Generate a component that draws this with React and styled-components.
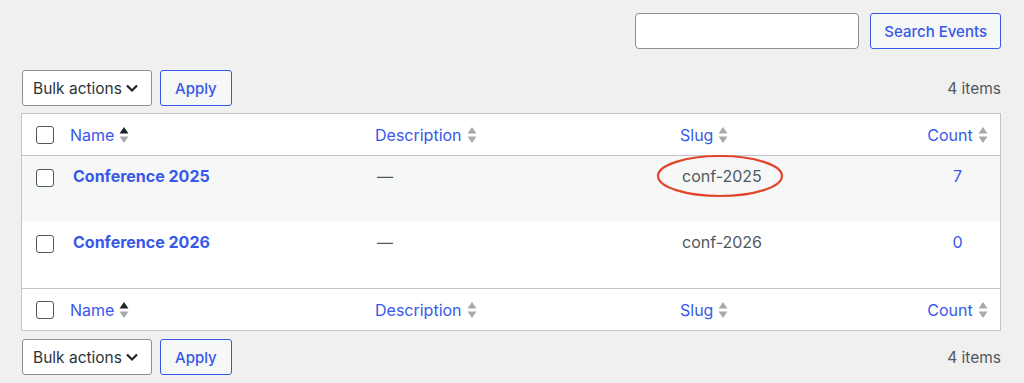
import React from "react";
import styled, { createGlobalStyle } from "styled-components";

const GlobalStyle = createGlobalStyle`
    body {
        margin: 0;
        background: #f0f0f0;
        font-family: Inter, "Noto Sans", "Liberation Sans", sans-serif;
        font-size: 16px;
        color: #2c3338;
    }
`;

const Page = styled.div`
    padding: 13px 23px 0 21px;
`;

const SearchBar = styled.div`
    display: flex;
    justify-content: flex-end;
    gap: 11px;
`;

const SearchInput = styled.input`
    width: 224px;
    height: 36px;
    box-sizing: border-box;
    border: 1px solid #8c8f94;
    border-radius: 4px;
    background: #fff;
`;

const Button = styled.button`
    height: 36px;
    box-sizing: border-box;
    padding: 0 ${(p) => p.$pad || 14}px;
    border: 1px solid #3858e9;
    border-radius: 3px;
    background: #f6f7f7;
    color: #3858e9;
    font-family: inherit;
    font-size: 15px;
    font-weight: 500;
    white-space: nowrap;
`;

const TableNav = styled.div`
    display: flex;
    align-items: center;
    gap: 8px;
    height: 36px;
    margin-top: ${(p) => p.$top}px;
`;

const Select = styled.div`
    display: flex;
    align-items: center;
    gap: 3px;
    height: 36px;
    box-sizing: border-box;
    width: 130px;
    margin-left: 1px;
    padding: 0 10px;
    border: 1px solid #8c8f94;
    border-radius: 3px;
    background: #fff;
    color: #2c3338;
    font-size: 15.5px;
    white-space: nowrap;
`;

const Count = styled.span`
    margin-left: auto;
    color: #50575e;
    font-size: 15.5px;
`;

const Table = styled.div`
    margin-top: 7px;
    border: 1px solid #c3c4c7;
    background: #fff;
`;

const Row = styled.div`
    display: grid;
    grid-template-columns: 39px 305px 305px 244px 1fr;
    align-items: ${(p) => (p.$head ? "center" : "start")};
    height: ${(p) => (p.$head ? 41 : 66)}px;
    background: ${(p) => (p.$striped ? "#f6f7f7" : "#fff")};
    border-bottom: ${(p) => (p.$bottomLine ? "1px solid #c3c4c7" : "none")};
    border-top: ${(p) => (p.$topLine ? "1px solid #c3c4c7" : "none")};
`;

const Cell = styled.div`
    position: relative;
    padding: ${(p) => (p.$head ? "0 9px" : "10px 11px 0")};
    text-align: ${(p) => (p.$center ? "center" : "left")};
    color: #50575e;
    font-size: 16px;
    line-height: 20px;
`;

const CheckCell = styled.div`
    display: flex;
    padding-left: 14px;
    padding-top: ${(p) => (p.$head ? 0 : 13)}px;
`;

const Checkbox = styled.span`
    display: inline-block;
    width: 18px;
    height: 18px;
    box-sizing: border-box;
    border: 1.5px solid #50575e;
    border-radius: 3px;
    background: #fff;
`;

const SortLink = styled.a`
    display: inline-flex;
    align-items: center;
    gap: 5px;
    color: #3858e9;
    text-decoration: none;
    font-size: 16px;
`;

const NameLink = styled.a`
    color: #3858e9;
    font-weight: 700;
    text-decoration: none;
    font-size: 16px;
    padding-left: 1px;
`;

const CountLink = styled.a`
    color: #3858e9;
    text-decoration: none;
`;

const Circle = styled.svg`
    position: absolute;
    left: -14px;
    top: -1px;
    overflow: visible;
`;

const SortIcon = ({ active }) => (
    <svg width="10" height="18" viewBox="0 0 10 18">
        <path d="M5 1 L9.5 7.5 L0.5 7.5 Z" fill={active ? "#1d2327" : "#a7aaad"} />
        <path d="M5 17 L9.5 10.5 L0.5 10.5 Z" fill="#a7aaad" />
    </svg>
);

const Chevron = () => (
    <svg width="14" height="14" viewBox="0 0 14 14">
        <path d="M2 4.5 L7 9.5 L12 4.5" fill="none" stroke="#1d2327" strokeWidth="2.2" />
    </svg>
);

const HeaderRow = ({ top }) => (
    <Row $head $bottomLine={!top} $topLine={top}>
        <CheckCell $head>
            <Checkbox />
        </CheckCell>
        <Cell $head>
            <SortLink>
                Name <SortIcon active />
            </SortLink>
        </Cell>
        <Cell $head>
            <SortLink>
                Description <SortIcon />
            </SortLink>
        </Cell>
        <Cell $head>
            <SortLink>
                Slug <SortIcon />
            </SortLink>
        </Cell>
        <Cell $head $center>
            <SortLink>
                Count <SortIcon />
            </SortLink>
        </Cell>
    </Row>
);

const events = [
    { name: "Conference 2025", slug: "conf-2025", count: 7, marked: true },
    { name: "Conference 2026", slug: "conf-2026", count: 0 },
];

const Nav = ({ top }) => (
    <TableNav $top={top}>
        <Select>
            Bulk actions <Chevron />
        </Select>
        <Button>Apply</Button>
        <Count>4 items</Count>
    </TableNav>
);

export default function App() {
    return (
        <Page>
            <GlobalStyle />
            <SearchBar>
                <SearchInput />
                <Button $pad={13}>Search Events</Button>
            </SearchBar>
            <Nav top={21} />
            <Table>
                <HeaderRow />
                {events.map((ev, i) => (
                    <Row key={ev.slug} $striped={i % 2 === 0}>
                        <CheckCell>
                            <Checkbox />
                        </CheckCell>
                        <Cell>
                            <NameLink>{ev.name}</NameLink>
                        </Cell>
                        <Cell>—</Cell>
                        <Cell>
                            {ev.slug}
                            {ev.marked && (
                                <Circle width="126" height="42" viewBox="0 0 126 42">
                                    <ellipse cx="63" cy="21" rx="62" ry="20" fill="none" stroke="#e2452b" strokeWidth="2.2" />
                                </Circle>
                            )}
                        </Cell>
                        <Cell $center>
                            <CountLink>{ev.count}</CountLink>
                        </Cell>
                    </Row>
                ))}
                <HeaderRow top />
            </Table>
            <Nav top={8} />
        </Page>
    );
}
